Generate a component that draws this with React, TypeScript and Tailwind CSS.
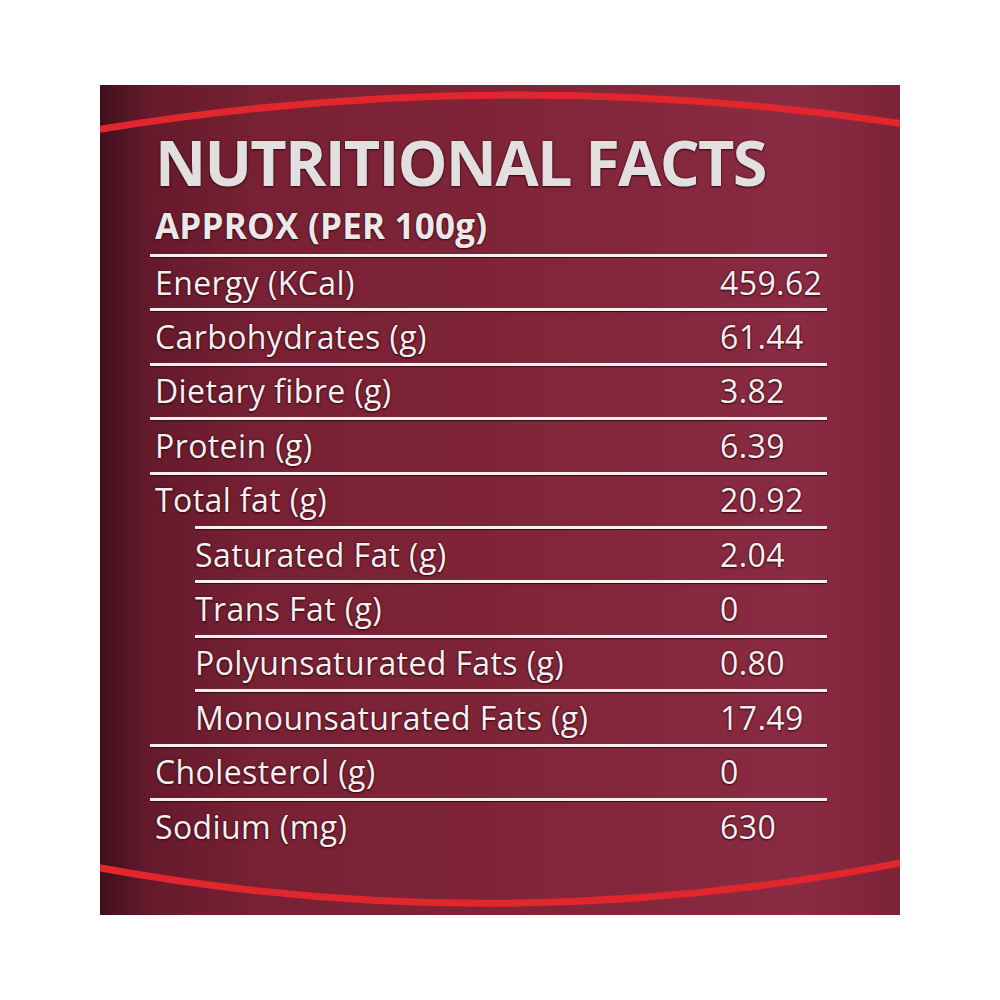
const rows: { label: string; value: string; sub?: boolean }[] = [
  { label: "Energy (KCal)", value: "459.62" },
  { label: "Carbohydrates (g)", value: "61.44" },
  { label: "Dietary fibre (g)", value: "3.82" },
  { label: "Protein (g)", value: "6.39" },
  { label: "Total fat (g)", value: "20.92" },
  { label: "Saturated Fat (g)", value: "2.04", sub: true },
  { label: "Trans Fat (g)", value: "0", sub: true },
  { label: "Polyunsaturated Fats (g)", value: "0.80", sub: true },
  { label: "Monounsaturated Fats (g)", value: "17.49", sub: true },
  { label: "Cholesterol (g)", value: "0" },
  { label: "Sodium (mg)", value: "630" },
]

const outline = "[text-shadow:0_0_2px_#3a0912,0_1px_2px_#3a0912]"

export default function App() {
  return (
    <div className="w-full h-[1000px] bg-white pt-[85px] pl-[100px] font-['Open_Sans',sans-serif]">
      <div className="relative w-[800px] h-[830px] overflow-hidden bg-[linear-gradient(90deg,#3f0f1b_0%,#641a2b_6%,#782134_20%,#812539_55%,#892b42_88%,#7c2338_100%)]">
        {/* red label arcs */}
        <svg className="absolute inset-0 pointer-events-none" width="800" height="830" viewBox="0 0 800 830">
          <path d="M-5 45 Q400 -22 805 39" stroke="#e1262e" strokeWidth="7" fill="none" />
          <path d="M-5 782 Q400 857 805 777" stroke="#e1262e" strokeWidth="7" fill="none" />
        </svg>

        <div className="relative pl-[55px]">
          <h1 className={`mt-[45px] text-[63px] leading-none font-bold tracking-[-1.8px] text-[#e2dfe0] ${outline}`}>
            NUTRITIONAL FACTS
          </h1>
          <p className={`mt-[15px] text-[35px] leading-none font-bold tracking-[0.2px] text-[#ece8e9] ${outline}`}>
            APPROX (PER 100g)
          </p>
        </div>

        <div className="relative mt-[11px] pl-[50px] w-[727px]">
          {rows.map((row, idx) => (
            <div key={idx} className={`flex h-[54.4px] ${row.sub ? "pl-[45px]" : ""}`}>
              <div className="flex-1 flex flex-col">
                <div className="h-[3px] bg-[#f6f0f2] shadow-[0_1px_1px_#3a0912]" />
                <div className="flex-1 flex items-center text-[32px] leading-none tracking-[0.4px] text-[#f6f0f2]">
                  <span className={`${row.sub ? "" : "pl-[5px]"} flex-1 ${outline}`}>{row.label}</span>
                  <span className={`w-[107px] ${outline}`}>{row.value}</span>
                </div>
              </div>
            </div>
          ))}
        </div>
      </div>
    </div>
  )
}
